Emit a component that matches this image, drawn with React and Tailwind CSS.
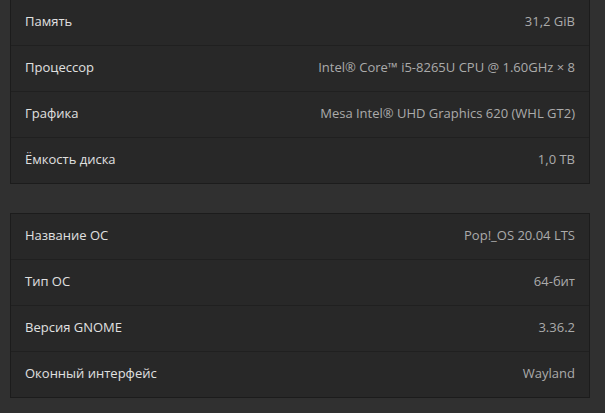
const hardware = [
  { label: 'Память', value: '31,2 GiB' },
  { label: 'Процессор', value: 'Intel® Core™ i5-8265U CPU @ 1.60GHz × 8' },
  { label: 'Графика', value: 'Mesa Intel® UHD Graphics 620 (WHL GT2)' },
  { label: 'Ёмкость диска', value: '1,0 TB' },
]

const system = [
  { label: 'Название ОС', value: 'Pop!_OS 20.04 LTS' },
  { label: 'Тип ОС', value: '64-бит' },
  { label: 'Версия GNOME', value: '3.36.2' },
  { label: 'Оконный интерфейс', value: 'Wayland' },
]

const InfoCard = ({ rows, className }) => (
  <div className={'border border-[#1c1c1c] bg-[#282828] ' + className}>
    {rows.map((row, index) => (
      <div
        key={index}
        className={
          'box-content flex h-[43px] items-center justify-between px-[14px] pb-[2px] ' +
          (index > 0 ? 'border-t border-[#202020]' : '')
        }
      >
        <span className="text-[#e0e0e0]">{row.label}</span>
        <span className="text-[#ababab]">{row.value}</span>
      </div>
    ))}
  </div>
)

export default function App() {
  return (
    <div
      className="h-[413px] w-[605px] overflow-hidden bg-[#303030] pl-[10px] pr-[15px] text-[13px]"
      style={{ fontFamily: '"Open Sans", "Noto Sans", sans-serif' }}
    >
      <InfoCard rows={hardware} className="-mt-[1px]" />
      <InfoCard rows={system} className="mt-[29px]" />
    </div>
  )
}
